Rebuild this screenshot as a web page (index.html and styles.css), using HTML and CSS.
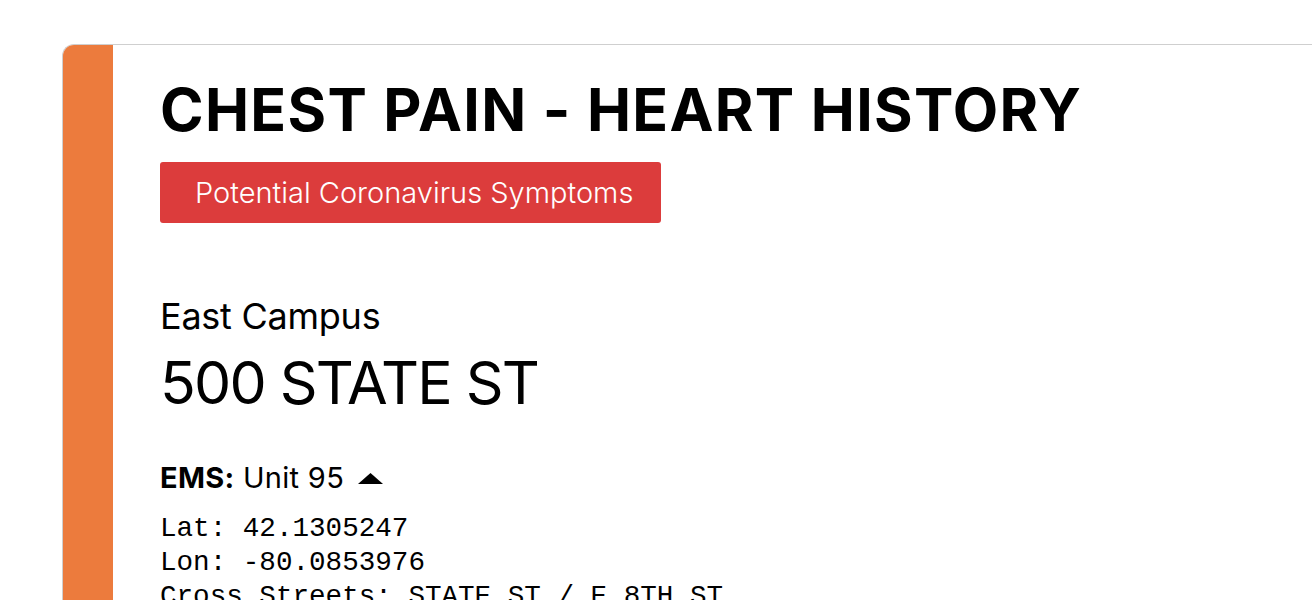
FILE: index.html
```html
<!DOCTYPE html>
<html lang="en">
<head>
<meta charset="utf-8">
<title>Call</title>
<link rel="stylesheet" href="styles.css">
</head>
<body>
<div class="card">
  <div class="stripe"></div>
  <div class="content">
    <h1 class="title">CHEST PAIN - HEART HISTORY</h1>
    <div class="badge">Potential Coronavirus Symptoms</div>
    <div class="place">East Campus</div>
    <div class="address">500 STATE ST</div>
    <div class="units"><b>EMS:</b> Unit 95<svg class="tri" width="25" height="11" viewBox="0 0 25 11"><path d="M12.5 0 L25 11 L0 11 Z" fill="#000"/></svg></div>
    <div class="mono">
      <div>Lat: 42.1305247</div>
      <div>Lon: -80.0853976</div>
      <div>Cross Streets: STATE ST / E 8TH ST</div>
    </div>
  </div>
</div>
</body>
</html>
```

FILE: styles.css
```css
html, body {
  margin: 0;
  padding: 0;
  background: #fff;
  overflow: hidden;
}
body {
  padding: 44px 0 0 62px;
  font-family: Inter, "Liberation Sans", sans-serif;
  color: #000;
}
.card {
  display: flex;
  width: 1400px;
  height: 700px;
  border: 1px solid #cfcfcf;
  border-right: none;
  border-bottom: none;
  border-top-left-radius: 12px;
  overflow: hidden;
}
.stripe {
  width: 50px;
  flex: none;
  background-color: #ec7b3d;
}
.content {
  padding: 29px 0 0 47px;
}
.title {
  margin: 0;
  font-size: 59px;
  font-weight: 700;
  line-height: 72px;
  letter-spacing: 1.3px;
}
.badge {
  display: inline-block;
  margin-top: 16px;
  height: 61px;
  box-sizing: border-box;
  padding: 0 28px 0 35px;
  background: #dc3c3c;
  color: #fff;
  border-radius: 3px;
  font-size: 29px;
  font-weight: 300;
  line-height: 61px;
  letter-spacing: 0;
}
.place {
  margin-top: 71px;
  font-size: 36px;
  line-height: 44px;
  letter-spacing: -0.25px;
}
.address {
  margin-top: 10px;
  font-size: 59px;
  line-height: 70px;
  letter-spacing: -1.8px;
}
.units {
  margin-top: 42px;
  font-size: 29px;
  line-height: 36px;
  letter-spacing: 0.3px;
}
.units b {
  font-weight: 700;
}
.tri {
  margin-left: 14px;
  vertical-align: 4px;
}
.mono {
  margin-top: 16px;
  font-family: "Liberation Mono", monospace;
  font-size: 27.6px;
  line-height: 34px;
}
```
